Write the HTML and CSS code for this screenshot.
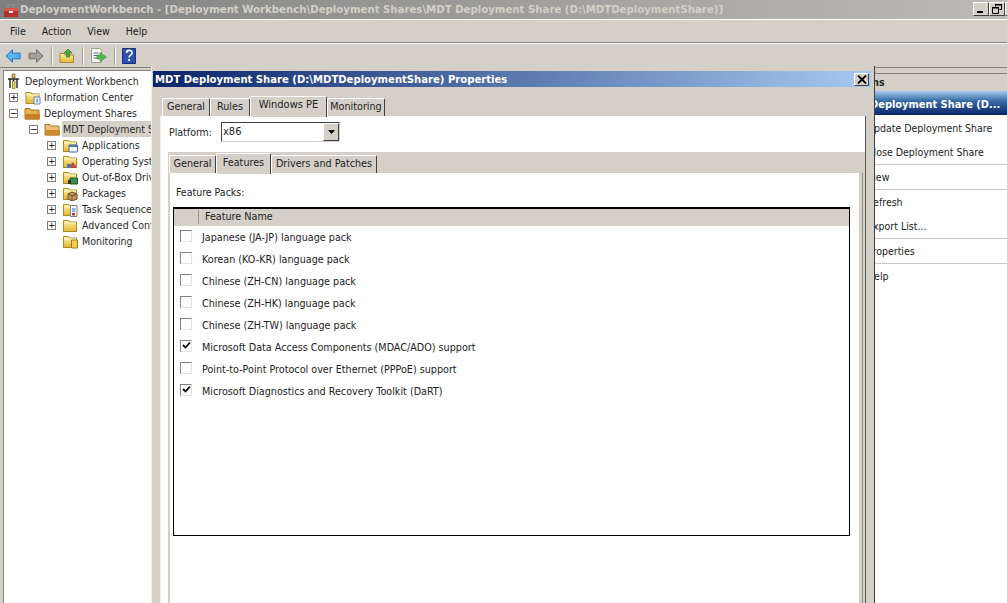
FILE: index.html
```html
<!DOCTYPE html>
<html lang="en">
<head>
<meta charset="utf-8">
<title>DeploymentWorkbench</title>
<link rel="stylesheet" href="styles.css">
</head>
<body>
<svg class="defs" width="0" height="0" aria-hidden="true">
  <defs>
    <linearGradient id="fold" x1="0" y1="0" x2="0" y2="1"><stop offset="0" stop-color="#fff3a8"/><stop offset="1" stop-color="#e2b52e"/></linearGradient>
    <symbol id="folder" viewBox="0 0 16 16">
      <path d="M1.500 3.500h5l1 1.500h7v9.500h-13z" fill="url(#fold)" stroke="#a9882a"/>
      <path d="M2 6h12" stroke="#fff6c0"/>
    </symbol>
  </defs>
</svg>
<div class="app">
  <header class="titlebar">
    <svg class="ti" width="16" height="16" viewBox="0 0 16 16"><path d="M1 6h14v9H1z" fill="#b5302a"/><path d="M1 6h14v3H1z" fill="#d8564a"/><path d="M5 6V3h6v3" fill="none" stroke="#8a8a8a" stroke-width="2"/><path d="M6 9h4v2H6z" fill="#eee"/></svg>
    <span class="title-text">DeploymentWorkbench - [Deployment Workbench\Deployment Shares\MDT Deployment Share (D:\MDTDeploymentShare)]</span>
    <span class="winbtns">
      <span class="wbtn"><svg width="14" height="12" viewBox="0 0 14 12"><path d="M3 8h6v2H3z" fill="#000"/></svg></span>
      <span class="wbtn"><svg width="14" height="12" viewBox="0 0 14 12"><path d="M5.500 1.500h6v5h-2M5.500 1.500v2M2.500 4.500h6v6h-6z" fill="none" stroke="#000"/><path d="M5 1h7v1.500H5zM2 4h7v1.500H2z" fill="#000"/></svg></span>
      <span class="wbtn"></span>
    </span>
  </header>
  <nav class="menubar">
    <span class="menu">File</span><span class="menu">Action</span><span class="menu">View</span><span class="menu">Help</span>
  </nav>
  <div class="toolbar">
    <svg class="tool" width="16" height="14" viewBox="0 0 16 14"><path d="M7.500.8 1 7l6.500 6.200V9.800h7.500V4.200H7.500z" fill="#58b4ee" stroke="#1f6fb5"/></svg>
    <svg class="tool tool-b" width="16" height="14" viewBox="0 0 16 14"><path d="M8.500.8 15 7l-6.500 6.200V9.800H1V4.200h7.500z" fill="#a0a09a" stroke="#6d6d68"/></svg>
    <span class="sep"></span>
    <svg class="tool tool-c" width="16" height="16" viewBox="0 0 16 16"><path d="M1 5.500h4l1 1.500h8.500v7.500H1z" fill="url(#fold)" stroke="#a9882a"/><path d="M9 1 5 5h2.500v4h3V5H13z" fill="#4faa3a" stroke="#2f7d25" stroke-width=".7"/></svg>
    <span class="sep"></span>
    <svg class="tool tool-c" width="17" height="16" viewBox="0 0 17 16"><path d="M1.500.5h8l2 2v12h-10z" fill="#fbfbf4" stroke="#9c9c90"/><path d="M3.500 5h5M3.500 7.500h5M3.500 10h5" stroke="#4b6a9c"/><path d="M10 4.500 16.500 9 10 13.500V11H7V7h3z" fill="#52b84a" stroke="#3a8e34" stroke-width=".6"/></svg>
    <span class="sep"></span>
    <svg class="tool tool-c" width="14" height="16" viewBox="0 0 14 16"><path d="M.5.500h13v15H.500z" fill="#2c4fb4" stroke="#1a2f80"/><path d="M4.500 5c0-3.500 5.500-3.500 5.500 0 0 2.200-3 2-3 4.500" fill="none" stroke="#fff" stroke-width="1.600"/><path d="M6.200 11h1.800v2H6.200z" fill="#fff"/></svg>
  </div>
  <main class="workspace">
    <section class="tree">
      <div class="row l0"><svg class="ico-root" width="13" height="16" viewBox="0 0 13 16"><path d="M1 6h11M3 6v9M6.500 6v9M10 6v9" stroke="#222" stroke-width="1.400"/><path d="M5 1h3v4H5z" fill="#e8c020" stroke="#444" stroke-width=".6"/><path d="M5.500 8h2.500v8H5.500z" fill="#ffe23a" stroke="#333" stroke-width=".5"/></svg><span class="lbl-root">Deployment Workbench</span></div>
      <div class="row l1"><span class="exp">+</span><svg class="ico" width="17" height="16"><use href="#folder"/><path d="M10 8h6v7h-6z" fill="#f4f8ff" stroke="#5d7fb5"/><path d="M13 9.500v4" stroke="#2c5fae"/></svg><span>Information Center</span></div>
      <div class="row l1"><span class="exp">−</span><svg class="ico" width="17" height="16" viewBox="0 0 17 16"><path d="M1 3.500h5l1 1.500h8v9H1z" fill="#e9b050" stroke="#9b7b30"/><path d="M1 9h15v5.500H1z" fill="#c88028"/></svg><span>Deployment Shares</span></div>
      <div class="row l2"><span class="exp">−</span><svg class="ico" width="17" height="16" viewBox="0 0 17 16"><path d="M1 3.500h5l1 1.500h8v9H1z" fill="#efc070" stroke="#9b7b30"/><path d="M1 9h15v5.500H1z" fill="#cc8a30"/></svg><span class="sel">MDT Deployment Share (D:\MDTDeploymentShare)</span></div>
      <div class="row l3"><span class="exp">+</span><svg class="ico" width="16" height="16"><use href="#folder"/><path d="M7 8h8.500v7H7z" fill="#f4f8ff" stroke="#4a6fa8"/><path d="M7 8h8.500v2H7z" fill="#4a78c0"/></svg><span>Applications</span></div>
      <div class="row l3"><span class="exp">+</span><svg class="ico" width="16" height="16"><use href="#folder"/><path d="M6 15 11 9l4 6z" fill="#c24a2a"/><path d="M5 11h4v4H5z" fill="#3f7fc0"/></svg><span>Operating Systems</span></div>
      <div class="row l3"><span class="exp">+</span><svg class="ico" width="16" height="16"><use href="#folder"/><path d="M8 9h7.500v6H8z" fill="#3f8a4a" stroke="#1f5a2a"/><path d="M6 11h3v4H6z" fill="#333"/></svg><span>Out-of-Box Drivers</span></div>
      <div class="row l3"><span class="exp">+</span><svg class="ico" width="16" height="16"><use href="#folder"/><path d="M6 9l4-2 5 2v5l-5 2-4-2z" fill="#c09a60" stroke="#6e5226"/><path d="M10 10v6M6 9l4 2 5-2" stroke="#6e5226" fill="none"/></svg><span>Packages</span></div>
      <div class="row l3"><span class="exp">+</span><svg class="ico" width="16" height="16"><use href="#folder"/><path d="M8.500 4.500h6.500v11H8.500z" fill="#fff" stroke="#7a7a90"/><path d="M10 8h3.500M10 10h3.500" stroke="#2c5fae"/><path d="M10 12h3v2.500h-3z" fill="#c03030"/></svg><span>Task Sequences</span></div>
      <div class="row l3"><span class="exp">+</span><svg class="ico" width="16" height="16"><use href="#folder"/></svg><span>Advanced Configuration</span></div>
      <div class="row l3"><span class="exp none"></span><svg class="ico" width="16" height="16"><use href="#folder"/><path d="M9.500 7h6v8h-6z" fill="#f0cf50" stroke="#9a7c20"/></svg><span>Monitoring</span></div>
    </section>
    <aside class="actions">
      <div class="act-head">Actions</div>
      <div class="act-title">MDT Deployment Share (D...</div>
      <div class="act-item">Update Deployment Share</div>
      <div class="act-item">Close Deployment Share</div>
      <div class="act-rule"></div>
      <div class="act-item">View</div>
      <div class="act-rule"></div>
      <div class="act-item">Refresh</div>
      <div class="act-item">Export List...</div>
      <div class="act-rule"></div>
      <div class="act-item">Properties</div>
      <div class="act-rule"></div>
      <div class="act-item">Help</div>
    </aside>
  </main>
  <div class="dialog">
    <div class="dlg-title">
      <span>MDT Deployment Share (D:\MDTDeploymentShare) Properties</span>
      <span class="dlg-close"><svg width="10" height="9" viewBox="0 0 10 9"><path d="M1 0.500l8 8M9 .5l-8 8" stroke="#000" stroke-width="1.800"/></svg></span>
    </div>
    <div class="tabs outer-tabs">
      <span class="tab">General</span><span class="tab">Rules</span><span class="tab on">Windows PE</span><span class="tab">Monitoring</span>
    </div>
    <div class="outer-panel">
      <div class="platform">
        <span>Platform:</span>
        <span class="combo"><span class="combo-val">x86</span><span class="combo-btn"><svg width="7" height="4" viewBox="0 0 7 4"><path d="M0 0h7L3.500 4z" fill="#000"/></svg></span></span>
      </div>
      <div class="tabs inner-tabs">
        <span class="tab">General</span><span class="tab on">Features</span><span class="tab">Drivers and Patches</span>
      </div>
      <div class="inner-panel">
        <div class="fp-label">Feature Packs:</div>
        <div class="table">
          <div class="thead"><span class="th-check"></span><span class="th-name">Feature Name</span></div>
          <div class="tr"><span class="cb"></span><span>Japanese (JA-JP) language pack</span></div>
          <div class="tr"><span class="cb"></span><span>Korean (KO-KR) language pack</span></div>
          <div class="tr"><span class="cb"></span><span>Chinese (ZH-CN) language pack</span></div>
          <div class="tr"><span class="cb"></span><span>Chinese (ZH-HK) language pack</span></div>
          <div class="tr"><span class="cb"></span><span>Chinese (ZH-TW) language pack</span></div>
          <div class="tr"><span class="cb checked"><svg width="9" height="9" viewBox="0 0 9 9"><path d="M1 4l2.500 2.500L8 1.500" fill="none" stroke="#000" stroke-width="1.800"/></svg></span><span>Microsoft Data Access Components (MDAC/ADO) support</span></div>
          <div class="tr"><span class="cb"></span><span>Point-to-Point Protocol over Ethernet (PPPoE) support</span></div>
          <div class="tr"><span class="cb checked"><svg width="9" height="9" viewBox="0 0 9 9"><path d="M1 4l2.500 2.500L8 1.500" fill="none" stroke="#000" stroke-width="1.800"/></svg></span><span>Microsoft Diagnostics and Recovery Toolkit (DaRT)</span></div>
        </div>
      </div>
    </div>
  </div>
</div>
</body>
</html>
```
FILE: styles.css
```css
* { box-sizing: border-box; }
html, body { margin: 0; padding: 0; height: 100%; overflow: hidden; background: #fff; }
body { font-family: "DejaVu Sans", "Noto Sans", sans-serif; font-stretch: condensed; font-size: 10.500px; color: #222; }
.defs { position: absolute; }
.app { position: relative; width: 1007px; height: 603px; overflow: hidden; display: flex; flex-direction: column; background: #d4d0c8; }

.titlebar { height: 19px; flex: none; display: flex; align-items: center; padding-left: 3px; background: linear-gradient(90deg, #7f7f7f, #bdbbb9); }
.ti { flex: none; }
.title-text { margin-left: 1px; font-weight: 700; font-size: 11.300px; color: #d4d0c8; white-space: nowrap; }
.winbtns { position: absolute; left: 973px; top: 2px; display: flex; width: 40px; }
.wbtn { width: 16px; height: 14px; flex: none; background: #d4d0c8; border: 1px solid; border-color: #fff #404040 #404040 #fff; display: flex; align-items: center; justify-content: center; overflow: hidden; }

.menubar { height: 24px; flex: none; display: flex; align-items: center; padding-left: 2px; border-top: 1px solid #fff; border-bottom: 1px solid #808080; }
.menu { padding: 0 8px; color: #1c1c1c; font-size: 10.500px; }

.toolbar { height: 25px; flex: none; display: flex; align-items: center; padding-left: 5px; border-top: 1px solid #fff; border-bottom: 1px solid #808080; }
.tool { flex: none; }
.tool-b { margin-left: 7px; }
.tool-c { margin-left: 6px; }
.sep { width: 2px; height: 18px; margin-left: 7px; background: linear-gradient(90deg, #a09c94 50%, #fff 50%); flex: none; }

.workspace { flex: 1; min-height: 0; display: flex; padding-top: 2px; padding-left: 3px; position: relative; }
.tree { width: 148px; flex: none; background: #fff; overflow: hidden; padding-top: 2px; border-left: 1px solid #808080; border-top: 1px solid #808080; }
.row { height: 16px; display: flex; align-items: center; white-space: nowrap; color: #2a2a2a; }
.l0 { padding-left: 3px; }
.lbl-root { margin-left: 5px; }
.l1 { padding-left: 5px; }
.l2 { padding-left: 25px; }
.l3 { padding-left: 43px; }
.ico-root { flex: none; }
.exp { width: 9px; height: 9px; flex: none; border: 1px solid #808080; background: #fff; color: #000; font: 9px/7px "DejaVu Sans", sans-serif; text-align: center; overflow: hidden; }
.exp.none { border: 0; background: transparent; }
.ico { flex: none; margin: 0 3px 0 6px; }
.l3 .ico { margin: 0 4px 0 6px; }
.sel { background: #d4d0c8; padding: 0 2px 0 1px; margin-left: -2px; height: 16px; line-height: 16px; }

.actions { width: 170px; margin-left: auto; flex: none; background: #fff; overflow: hidden; white-space: nowrap; }
.act-head { height: 21px; background: #d4d0c8; font-weight: 700; padding: 5px 0 0 8px; line-height: 15px; border-bottom: 2px solid #d4d0c8; background-image: linear-gradient(#808080, #808080); background-repeat: no-repeat; background-size: 100% 1px; background-position: 0 3px; }
.act-title { height: 24px; margin-bottom: 1px; padding-left: 5px; line-height: 27px; font-weight: 700; color: #fff; font-size: 10.950px; background: linear-gradient(180deg, #a6caf0 0, #3a6ea5 40%, #0a246a 100%); }
.act-item { height: 24px; line-height: 25px; padding-left: 30px; color: #222; }
.act-rule { height: 1px; background: #c8c8c8; }

.dialog { position: absolute; left: 151px; top: 66px; width: 724px; height: 560px; background: #d4d0c8; border-left: 1px solid #ecebe6; border-right: 1px solid #404040; padding: 5px 3px 0 1px; }
.dlg-title { height: 16px; display: flex; align-items: center; justify-content: space-between; padding: 0 2px 0 2px; color: #fff; font-weight: 700; font-size: 11.200px; background: linear-gradient(90deg, #0a246a, #a6caf0); }
.dlg-close { width: 15px; height: 13px; flex: none; background: #d4d0c8; border: 1px solid; border-color: #fff #404040 #404040 #fff; display: flex; align-items: center; justify-content: center; }

.tabs { display: flex; align-items: flex-end; white-space: nowrap; }
.tab { height: 18px; background: #d4d0c8; text-align: center; border-top: 1px solid #fff; border-left: 1px solid #fff; border-right: 1px solid #404040; border-radius: 2px 2px 0 0; color: #222; font-size: 10.700px; }
.tab.on { height: 21px; margin-bottom: -1px; position: relative; z-index: 1; }
.outer-tabs { height: 21px; margin: 8px 0 0 9px; }
.outer-tabs .tab { line-height: 15px; }
.outer-tabs .tab:nth-child(1) { width: 48px; }
.outer-tabs .tab:nth-child(2) { width: 40px; }
.outer-tabs .tab:nth-child(3) { width: 77px; font-size: 11px; }
.outer-tabs .tab:nth-child(4) { width: 58px; }
.outer-panel { margin-left: 7px; margin-right: 5px; border-left: 1px solid #ecebe6; border-right: 1px solid #555; background: #fff; height: 500px; }
.platform { height: 36px; display: flex; align-items: center; padding: 0 0 4px 8px; gap: 5px; }
.combo { width: 119px; height: 20px; margin-left: 4px; display: flex; border: 1px solid; border-color: #404040 #d4d0c8 #d4d0c8 #404040; background: #fff; }
.combo-val { flex: 1; padding-left: 1px; line-height: 18px; font-size: 11px; }
.combo-btn { width: 16px; background: #d4d0c8; border: 1px solid; border-color: #fff #404040 #404040 #fff; display: flex; align-items: center; justify-content: center; }
.inner-tabs { height: 21px; margin-left: 7px; background: #d4d0c8; padding-left: 1px; }
.inner-tabs .tab { line-height: 15px; }
.inner-tabs .tab.on { line-height: 17px; }
.inner-tabs .tab:nth-child(1) { width: 47px; }
.inner-tabs .tab:nth-child(2) { width: 55px; }
.inner-tabs .tab:nth-child(3) { width: 106px; }
.inner-panel { margin-left: 7px; border-left: 2px solid #d4d0c8; background: #fff; height: 460px; padding: 11px 0 0 3px; box-shadow: inset -2px 0 0 #d4d0c8, inset -3px 0 0 #909090, inset -6px 0 0 #d4d0c8; }
.fp-label { height: 23px; line-height: 16px; padding-left: 3px; }
.table { width: 677px; height: 329px; border: 1px solid #000; border-top-width: 2px; background: #fff; font-size: 10.700px; }
.thead { height: 17px; display: flex; align-items: center; padding-bottom: 2px; background: #d4d0c8; }
.th-check { width: 25px; height: 14px; border-right: 1px solid #9c9890; }
.th-name { padding-left: 6px; }
.tr { height: 22px; display: flex; align-items: center; padding-left: 6px; gap: 10px; white-space: nowrap; }
.cb { width: 12px; height: 12px; flex: none; margin-bottom: 3px; border: 1px solid; border-color: #808080 #e4e2dc #e4e2dc #808080; background: #fff; display: flex; align-items: center; justify-content: center; }
```
